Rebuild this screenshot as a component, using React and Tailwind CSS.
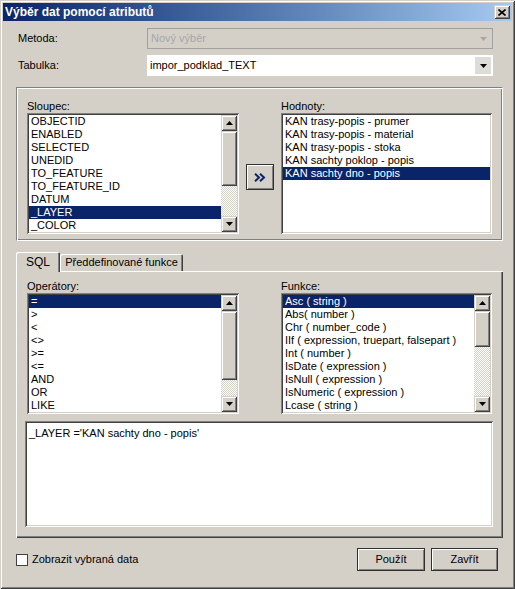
import React from "react";

const FONT = "font-['Liberation_Sans',Arial,sans-serif]";
const SUNKEN =
  "shadow-[inset_1px_1px_0_#808080,inset_-1px_-1px_0_#ffffff,inset_2px_2px_0_#404040,inset_-2px_-2px_0_#d4d0c8]";
const RAISED =
  "shadow-[inset_1px_1px_0_#d4d0c8,inset_-1px_-1px_0_#404040,inset_2px_2px_0_#ffffff,inset_-2px_-2px_0_#808080]";

const Arrow = ({ down = false, color = "#000" }) => (
  <svg width="7" height="4" viewBox="0 0 7 4">
    {down ? (
      <path d="M0 0H7L3.5 4Z" fill={color} />
    ) : (
      <path d="M0 4H7L3.5 0Z" fill={color} />
    )}
  </svg>
);

const ScrollBar = ({ thumb }) => (
  <div className="w-[16px] flex flex-col shrink-0">
    <div className={`h-[16px] bg-[#d4d0c8] flex items-center justify-center ${RAISED}`}>
      <Arrow />
    </div>
    <div className="flex-1 flex flex-col [background-image:repeating-conic-gradient(#ffffff_0%_25%,#d4d0c8_0%_50%)] [background-size:2px_2px]">
      <div className={`bg-[#d4d0c8] ${RAISED} ${thumb}`} />
    </div>
    <div className={`h-[16px] bg-[#d4d0c8] flex items-center justify-center ${RAISED}`}>
      <Arrow down />
    </div>
  </div>
);

const ListBox = ({ items, selected, thumb, className }) => (
  <div className={`bg-white flex p-[2px] h-[121px] ${SUNKEN} ${className}`}>
    <div className="flex-1 flex flex-col overflow-hidden">
      {items.map((item, i) => (
        <div
          key={i}
          className={`h-[13px] leading-[13px] pl-[2px] whitespace-nowrap ${
            i === selected ? "bg-[#0a246a] text-white" : "text-black"
          }`}
        >
          {item}
        </div>
      ))}
    </div>
    {thumb && <ScrollBar thumb={thumb} />}
  </div>
);

const PushButton = ({ children, className }) => (
  <button
    className={`bg-[#d4d0c8] border border-[#303030] shadow-[inset_1px_1px_0_#ffffff,inset_-1px_-1px_0_#808080] flex items-center justify-center ${className}`}
  >
    {children}
  </button>
);

const columns = [
  "OBJECTID",
  "ENABLED",
  "SELECTED",
  "UNEDID",
  "TO_FEATURE",
  "TO_FEATURE_ID",
  "DATUM",
  "_LAYER",
  "_COLOR",
];

const values = [
  "KAN trasy-popis - prumer",
  "KAN trasy-popis - material",
  "KAN trasy-popis - stoka",
  "KAN sachty poklop - popis",
  "KAN sachty dno - popis",
];

const operators = ["=", ">", "<", "<>", ">=", "<=", "AND", "OR", "LIKE"];

const functions = [
  "Asc ( string )",
  "Abs( number )",
  "Chr ( number_code )",
  "IIf ( expression, truepart, falsepart )",
  "Int ( number )",
  "IsDate ( expression )",
  "IsNull ( expression )",
  "IsNumeric ( expression )",
  "Lcase ( string )",
];

export default function App() {
  return (
    <div
      className={`w-[515px] h-[589px] bg-[#d4d0c8] p-[3px] flex flex-col text-[11px] text-black ${FONT} shadow-[inset_1px_1px_0_#d4d0c8,inset_-1px_-1px_0_#404040,inset_2px_2px_0_#ffffff,inset_-2px_-2px_0_#808080]`}
    >
      {/* title bar */}
      <div className="h-[18px] shrink-0 bg-linear-to-r from-[#0a246a] to-[#a6caf0] flex items-center pl-[2px] pr-[2px]">
        <span className="flex-1 text-white font-bold text-[12px] leading-[18px]">
          Výběr dat pomocí atributů
        </span>
        <div className={`w-[16px] h-[14px] bg-[#d4d0c8] flex items-center justify-center ${RAISED}`}>
          <svg width="8" height="7" viewBox="0 0 8 7">
            <path d="M0.5 0.5L7.5 6.5M7.5 0.5L0.5 6.5" stroke="#000" strokeWidth="1.6" />
          </svg>
        </div>
      </div>

      <div className="flex flex-col pl-[13px] pr-[9px]">
        {/* Metoda */}
        <div className="flex items-center h-[21px] mt-[7px]">
          <span className="w-[131px] pl-[2px]">Metoda:</span>
          <div className="w-[346px] h-[21px] border border-[#a0a0a0] flex items-center pl-[3px] pr-[5px]">
            <span className="flex-1 text-[#a7a6aa]">Nový výběr</span>
            <Arrow down color="#a7a6aa" />
          </div>
        </div>

        {/* Tabulka */}
        <div className="flex items-center h-[21px] mt-[6px]">
          <span className="w-[131px] pl-[2px]">Tabulka:</span>
          <div className="w-[346px] h-[21px] bg-white flex items-center p-[2px] pl-[3px]">
            <span className="flex-1">impor_podklad_TEXT</span>
            <div className="w-[16px] h-[17px] bg-[#dedcd6] flex items-center justify-center">
              <Arrow down />
            </div>
          </div>
        </div>

        {/* group box */}
        <div className="mt-[11px] h-[154px] border border-t-[#808080] border-l-[#808080] border-r-white border-b-white shadow-[inset_1px_1px_0_#ffffff,inset_-1px_-1px_0_#808080] flex pt-[12px] pl-[10px]">
          <div className="flex flex-col w-[212px]">
            <span className="h-[13px] leading-[13px]">Sloupec:</span>
            <ListBox items={columns} selected={7} thumb="h-[55px]" />
          </div>
          <PushButton className="w-[28px] h-[26px] mt-[64px] ml-[7px]">
            <svg width="12" height="9" viewBox="0 0 12 9">
              <path d="M1 0.8L5 4.5L1 8.2M6 0.8L10 4.5L6 8.2" stroke="#0a246a" strokeWidth="2" fill="none" />
            </svg>
          </PushButton>
          <div className="flex flex-col w-[211px] ml-[7px]">
            <span className="h-[13px] leading-[13px]">Hodnoty:</span>
            <ListBox items={values} selected={4} />
          </div>
        </div>

        {/* tabs */}
        <div className="mt-[11px] h-[19px] flex items-end">
          <div className="relative z-10 w-[44px] h-[20px] -mb-[1px] bg-[#d4d0c8] rounded-t-[2px] shadow-[inset_1px_1px_0_#ffffff,inset_-1px_0_0_#404040,inset_-2px_0_0_#808080] flex items-center justify-center pb-[1px] text-[12px]">
            SQL
          </div>
          <div className="w-[123px] h-[17px] bg-[#d4d0c8] rounded-t-[2px] shadow-[inset_1px_1px_0_#ffffff,inset_-1px_0_0_#404040,inset_-2px_0_0_#808080] flex items-center justify-center">
            Předdefinované funkce
          </div>
        </div>

        {/* tab panel */}
        <div className="h-[267px] bg-[#d4d0c8] shadow-[inset_1px_1px_0_#ffffff,inset_-1px_-1px_0_#404040,inset_-2px_-2px_0_#808080] flex flex-col pt-[9px] pl-[9px] pr-[9px]">
          <div className="flex">
            <div className="flex flex-col w-[212px] ml-[2px]">
              <span className="h-[13px] leading-[13px]">Operátory:</span>
              <ListBox items={operators} selected={0} thumb="h-[69px]" />
            </div>
            <div className="flex flex-col w-[211px] ml-[42px]">
              <span className="h-[13px] leading-[13px]">Funkce:</span>
              <ListBox items={functions} selected={0} thumb="h-[36px]" />
            </div>
          </div>
          <div className={`mt-[7px] h-[106px] w-[468px] bg-white p-[2px] pl-[4px] pt-[4px] ${SUNKEN}`}>
            _LAYER ='KAN sachty dno - popis'
          </div>
        </div>

        {/* bottom row */}
        <div className="mt-[10px] h-[23px] flex items-center pr-[5px]">
          <div className="w-[12px] h-[12px] bg-white border border-[#404040] ml-[0px]" />
          <span className="ml-[4px] flex-1">Zobrazit vybraná data</span>
          <PushButton className="w-[68px] h-[23px]">Použít</PushButton>
          <PushButton className="w-[67px] h-[23px] ml-[6px]">Zavřít</PushButton>
        </div>
      </div>
    </div>
  );
}
